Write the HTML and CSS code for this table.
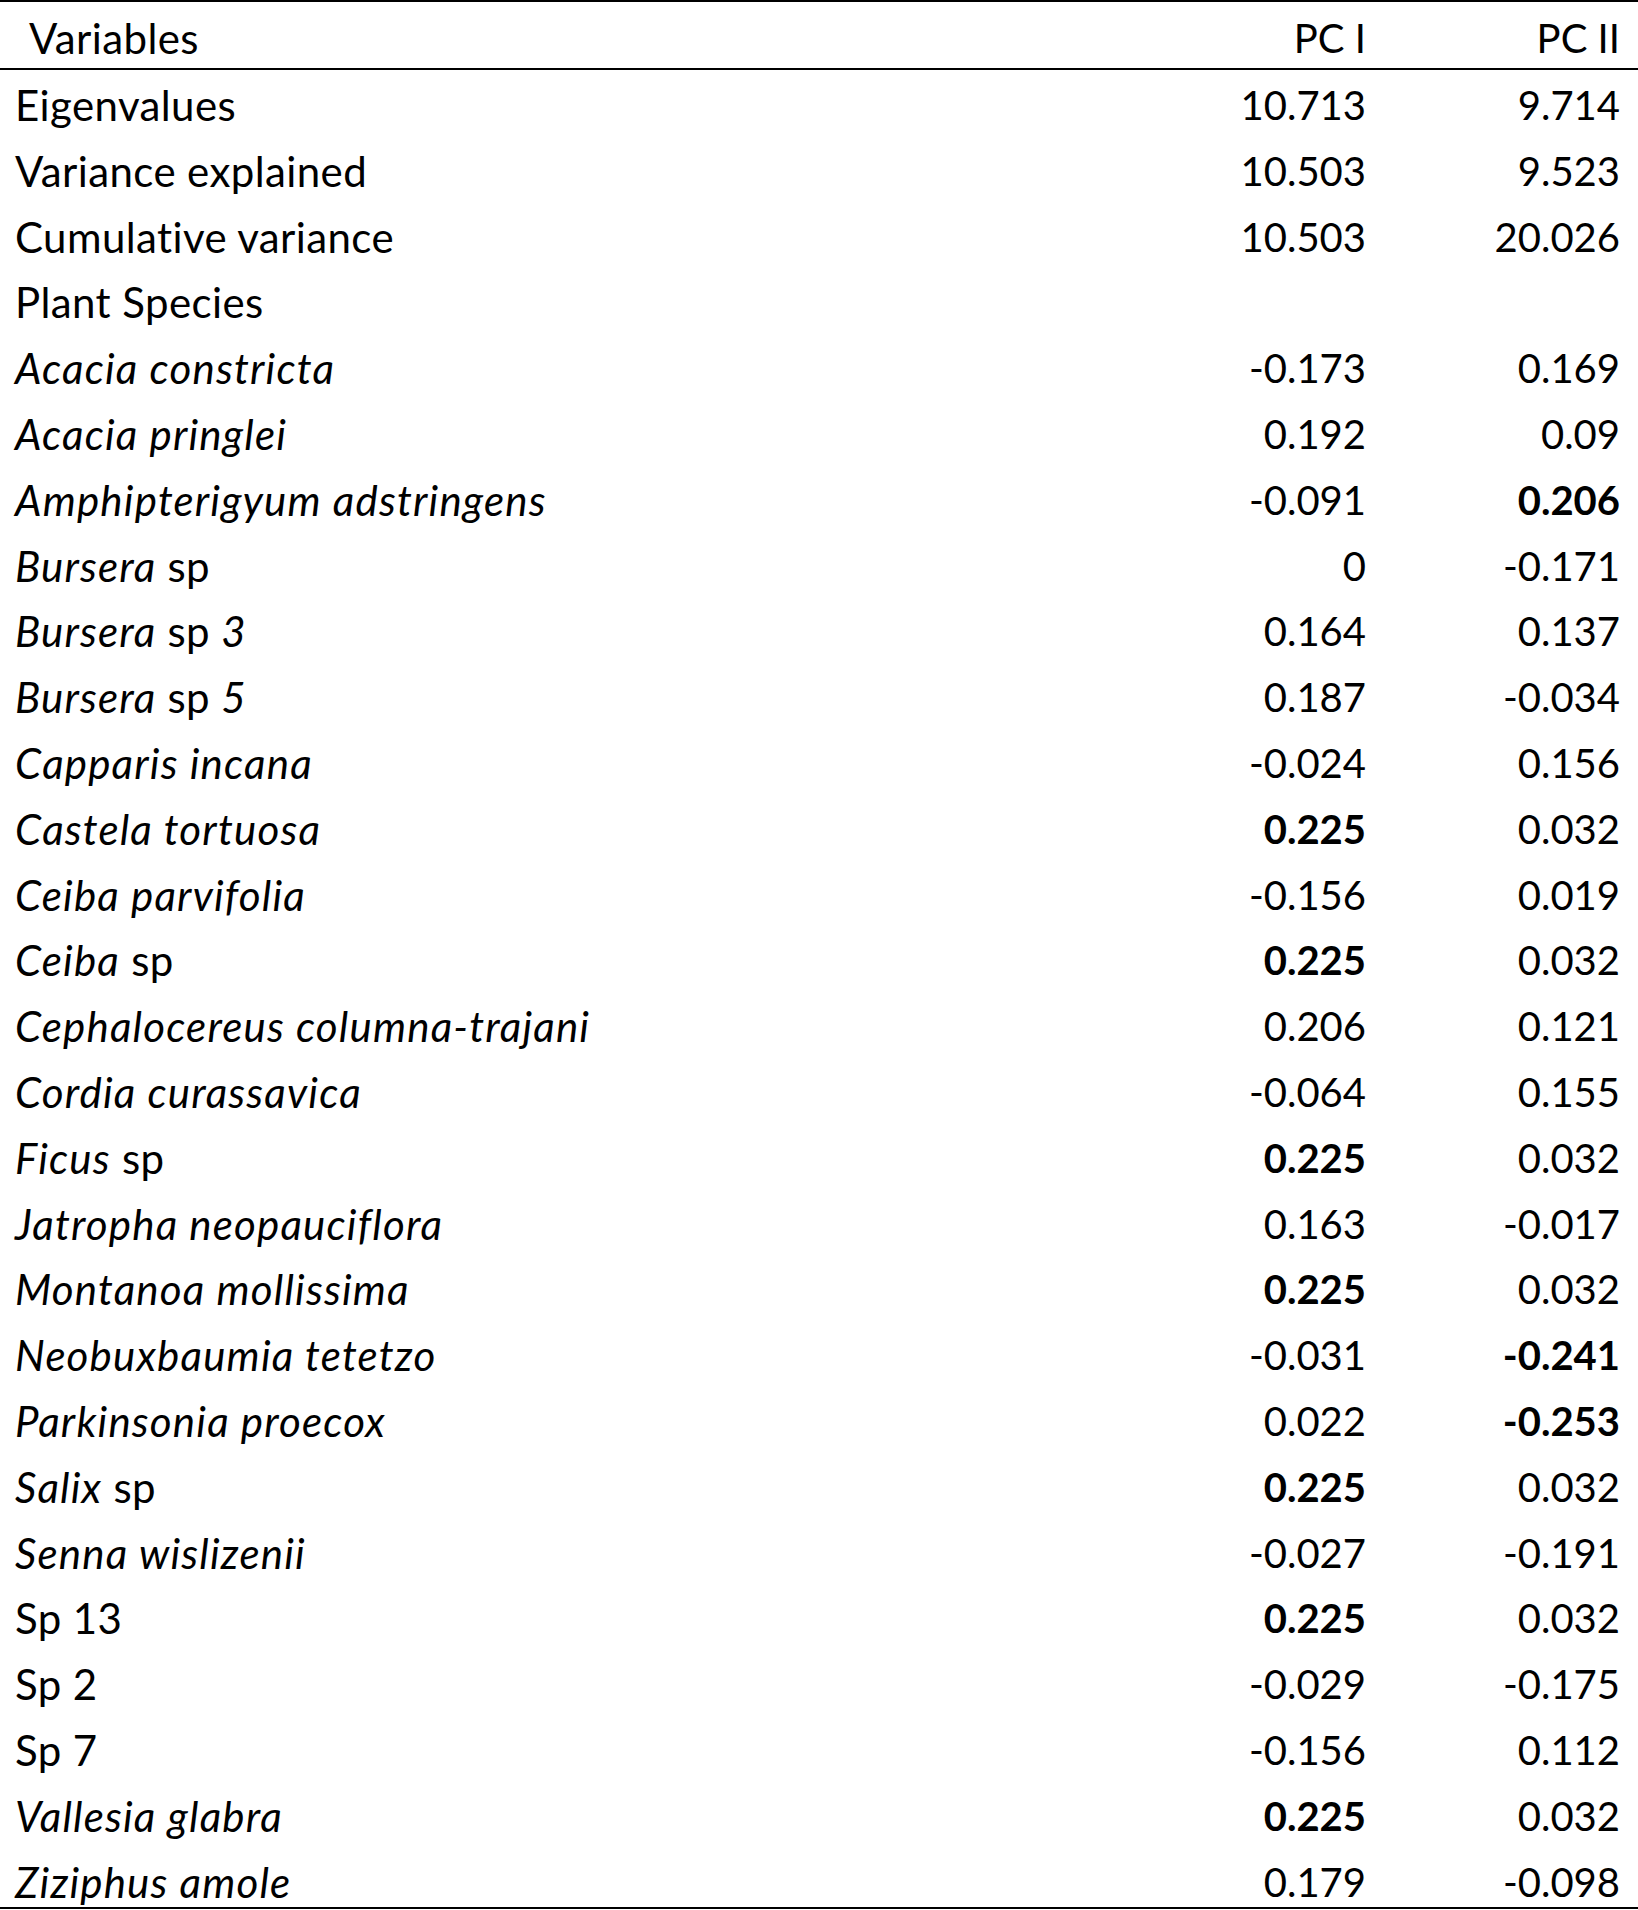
FILE: index.html
```html
<!DOCTYPE html>
<html lang="en">
<head>
<meta charset="utf-8">
<title>PCA loadings</title>
<link rel="stylesheet" href="styles.css">
</head>
<body>
<div class="pca" role="table">
  <div class="row head" role="row">
    <div class="cell label head-label" role="columnheader">Variables</div>
    <div class="cell num pc1" role="columnheader">PC I</div>
    <div class="cell num pc2" role="columnheader">PC II</div>
  </div>
  <div class="body" role="rowgroup">
    <div class="row" role="row"><div class="cell label">Eigenvalues</div><div class="cell num pc1">10.713</div><div class="cell num pc2">9.714</div></div>
    <div class="row" role="row"><div class="cell label">Variance explained</div><div class="cell num pc1">10.503</div><div class="cell num pc2">9.523</div></div>
    <div class="row" role="row"><div class="cell label">Cumulative variance</div><div class="cell num pc1">10.503</div><div class="cell num pc2">20.026</div></div>
    <div class="row" role="row"><div class="cell label">Plant Species</div><div class="cell num pc1"></div><div class="cell num pc2"></div></div>
    <div class="row" role="row"><div class="cell label"><i>Acacia constricta</i></div><div class="cell num pc1">-0.173</div><div class="cell num pc2">0.169</div></div>
    <div class="row" role="row"><div class="cell label"><i>Acacia pringlei</i></div><div class="cell num pc1">0.192</div><div class="cell num pc2">0.09</div></div>
    <div class="row" role="row"><div class="cell label"><i>Amphipterigyum adstringens</i></div><div class="cell num pc1">-0.091</div><div class="cell num pc2"><b>0.206</b></div></div>
    <div class="row" role="row"><div class="cell label"><i>Bursera</i> sp</div><div class="cell num pc1">0</div><div class="cell num pc2">-0.171</div></div>
    <div class="row" role="row"><div class="cell label"><i>Bursera</i> sp <i>3</i></div><div class="cell num pc1">0.164</div><div class="cell num pc2">0.137</div></div>
    <div class="row" role="row"><div class="cell label"><i>Bursera</i> sp <i>5</i></div><div class="cell num pc1">0.187</div><div class="cell num pc2">-0.034</div></div>
    <div class="row" role="row"><div class="cell label"><i>Capparis incana</i></div><div class="cell num pc1">-0.024</div><div class="cell num pc2">0.156</div></div>
    <div class="row" role="row"><div class="cell label"><i>Castela tortuosa</i></div><div class="cell num pc1"><b>0.225</b></div><div class="cell num pc2">0.032</div></div>
    <div class="row" role="row"><div class="cell label"><i>Ceiba parvifolia</i></div><div class="cell num pc1">-0.156</div><div class="cell num pc2">0.019</div></div>
    <div class="row" role="row"><div class="cell label"><i>Ceiba</i> sp</div><div class="cell num pc1"><b>0.225</b></div><div class="cell num pc2">0.032</div></div>
    <div class="row" role="row"><div class="cell label"><i>Cephalocereus columna-trajani</i></div><div class="cell num pc1">0.206</div><div class="cell num pc2">0.121</div></div>
    <div class="row" role="row"><div class="cell label"><i>Cordia curassavica</i></div><div class="cell num pc1">-0.064</div><div class="cell num pc2">0.155</div></div>
    <div class="row" role="row"><div class="cell label"><i>Ficus</i> sp</div><div class="cell num pc1"><b>0.225</b></div><div class="cell num pc2">0.032</div></div>
    <div class="row" role="row"><div class="cell label"><i>Jatropha neopauciflora</i></div><div class="cell num pc1">0.163</div><div class="cell num pc2">-0.017</div></div>
    <div class="row" role="row"><div class="cell label"><i>Montanoa mollissima</i></div><div class="cell num pc1"><b>0.225</b></div><div class="cell num pc2">0.032</div></div>
    <div class="row" role="row"><div class="cell label"><i>Neobuxbaumia tetetzo</i></div><div class="cell num pc1">-0.031</div><div class="cell num pc2"><b>-0.241</b></div></div>
    <div class="row" role="row"><div class="cell label"><i>Parkinsonia proecox</i></div><div class="cell num pc1">0.022</div><div class="cell num pc2"><b>-0.253</b></div></div>
    <div class="row" role="row"><div class="cell label"><i>Salix</i> sp</div><div class="cell num pc1"><b>0.225</b></div><div class="cell num pc2">0.032</div></div>
    <div class="row" role="row"><div class="cell label"><i>Senna wislizenii</i></div><div class="cell num pc1">-0.027</div><div class="cell num pc2">-0.191</div></div>
    <div class="row" role="row"><div class="cell label">Sp 13</div><div class="cell num pc1"><b>0.225</b></div><div class="cell num pc2">0.032</div></div>
    <div class="row" role="row"><div class="cell label">Sp 2</div><div class="cell num pc1">-0.029</div><div class="cell num pc2">-0.175</div></div>
    <div class="row" role="row"><div class="cell label">Sp 7</div><div class="cell num pc1">-0.156</div><div class="cell num pc2">0.112</div></div>
    <div class="row" role="row"><div class="cell label"><i>Vallesia glabra</i></div><div class="cell num pc1"><b>0.225</b></div><div class="cell num pc2">0.032</div></div>
    <div class="row" role="row"><div class="cell label"><i>Ziziphus amole</i></div><div class="cell num pc1">0.179</div><div class="cell num pc2">-0.098</div></div>
  </div>
</div>
</body>
</html>
```

FILE: styles.css
```css
html, body {
  margin: 0;
  padding: 0;
  background: #ffffff;
}

body {
  font-family: "Lato", "Open Sans", "Liberation Sans", sans-serif;
  font-size: 40px;
  color: #000000;
}

.pca {
  width: 1638px;
  border-top: 2px solid #000;
  border-bottom: 2px solid #000;
}

.row {
  display: grid;
  grid-template-columns: 1138px 250px 250px;
  height: 65.8px;
}

.row.head {
  height: 66px;
  border-bottom: 2px solid #000;
}

.body .row:last-child {
  height: 60.4px;
}

.cell {
  line-height: 40px;
  padding-top: 15px;
  white-space: nowrap;
}

.head .cell {
  padding-top: 16px;
}

.label {
  text-align: left;
  padding-left: 15px;
  font-size: 42px;
  letter-spacing: 0.4px;
}

.label i {
  letter-spacing: 1.2px;
}

.head-label {
  padding-left: 29px;
}

.num {
  text-align: right;
}

.pc1 { padding-right: 22px; }
.pc2 { padding-right: 18px; }

.pca i { font-style: italic; }
.pca b { font-weight: 700; }
```
